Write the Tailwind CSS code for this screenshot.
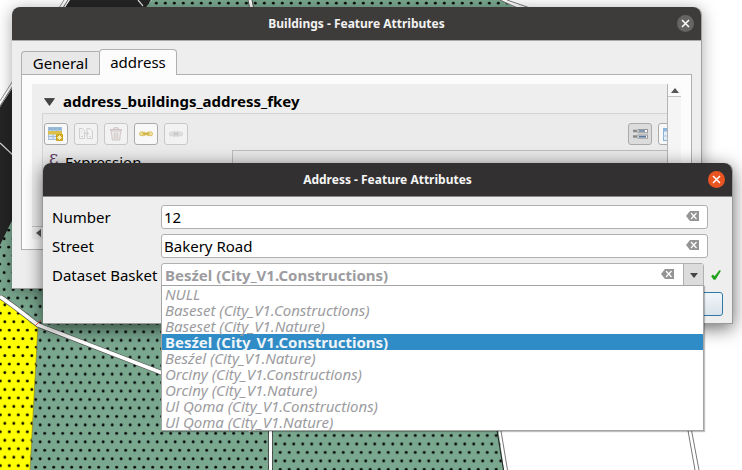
<!DOCTYPE html>
<html lang="en">
<head>
<meta charset="utf-8">
<title>Feature Attributes</title>
<script src="https://cdn.jsdelivr.net/npm/@tailwindcss/browser@4"></script>
</head>
<body class="relative h-screen overflow-hidden bg-white font-['Noto_Sans','Open_Sans',sans-serif] text-[15px] text-black">

<!-- Map canvas -->
<svg class="absolute left-0 top-0" width="742" height="470" viewBox="0 0 742 470" aria-hidden="true">
  <defs>
    <pattern id="dotsLeft" width="9" height="16.93" patternUnits="userSpaceOnUse" x="4.2" y="463.1">
      <rect width="9" height="17" fill="#7aa88f"/>
      <circle cx="4.5" cy="4.2" r="1.4"/><circle cx="0" cy="12.7" r="1.4"/><circle cx="9" cy="12.7" r="1.4"/>
    </pattern>
    <pattern id="dotsRight" width="9" height="16.93" patternUnits="userSpaceOnUse" x="5.7" y="448.3">
      <rect width="9" height="17" fill="#7aa88f"/>
      <circle cx="4.5" cy="4.2" r="1.4"/><circle cx="0" cy="12.7" r="1.4"/><circle cx="9" cy="12.7" r="1.4"/>
    </pattern>
    <pattern id="dotsTop" width="9" height="16.93" patternUnits="userSpaceOnUse" x="-1.2" y="-1">
      <rect width="9" height="17" fill="#7aa88f"/>
      <circle cx="4.5" cy="4.2" r="1.4"/><circle cx="0" cy="12.7" r="1.4"/><circle cx="9" cy="12.7" r="1.4"/>
    </pattern>
    <pattern id="dotsYellow" width="9" height="16.93" patternUnits="userSpaceOnUse" x="4.8" y="461.5">
      <rect width="9" height="17" fill="#ffff00"/>
      <circle cx="4.5" cy="4.2" r="1.4"/><circle cx="0" cy="12.7" r="1.4"/><circle cx="9" cy="12.7" r="1.4"/>
    </pattern>
  </defs>
  <path d="M152 0H500L520 10H140Z" fill="url(#dotsTop)"/>
  <path d="M0 240L40 170H270V470H0Z" fill="url(#dotsLeft)"/>
  <path d="M270 400H494L504 470H270Z" fill="url(#dotsRight)"/>
  <path d="M492 400L503.500 470" stroke="#222" fill="none"/>
  <path d="M70 0H151L40 163L0 245V107Z" fill="#252525"/>
  <path d="M68 0L0 106" stroke="#444" stroke-width=".8"/>
  <path d="M64 0L0 101" stroke="#777" stroke-width=".8"/>
  <path d="M138 0L143 6M0 143L14 156" stroke="#ddd" stroke-width="1.2"/>
  <path d="M0 299L38 325L30 470H0Z" fill="url(#dotsYellow)"/>
  <path d="M38 325L30 470" stroke="#8a7a20" stroke-width=".6"/>
  <path d="M0 296.500L16 308L38 325L170 376" fill="none" stroke="#555" stroke-width="5"/>
  <path d="M0 296.500L16 308L38 325L170 376" fill="none" stroke="#fff" stroke-width="3.600"/>
  <path d="M35 326L41 320" stroke="#e33" stroke-width=".8"/>
  <path d="M250 0L252 10M270.500 425V470" stroke="#444" stroke-width="4.600"/>
  <path d="M250 0L252 10M270.500 425V470" stroke="#fff" stroke-width="3"/>
  <path d="M500 0L520 9M507 0L530 8M500 425L507.500 470M687 425L695 470M690.500 425L699 470" fill="none" stroke="#555" stroke-width=".8"/>
</svg>

<!-- Buildings window -->
<section aria-labelledby="win1" class="absolute left-[12px] right-[40px] top-[7px] rounded-t-lg border-r border-b border-[#a0a0a0] bg-[#eeeeee] shadow-[0_2px_16px_rgba(0,0,0,0.35)]">
  <header class="relative flex h-[33px] items-center justify-center rounded-t-lg bg-[#3e3c3a]">
    <h1 id="win1" class="text-[12px] font-bold text-[#f2f2f2]">Buildings - Feature Attributes</h1>
    <button aria-label="Close" class="absolute right-[7px] flex size-[17px] items-center justify-center rounded-full bg-[#666564]">
      <svg width="9" height="9" viewBox="0 0 9 9"><path d="M1 1L8 8M8 1L1 8" stroke="#fff" stroke-width="1.500"/></svg>
    </button>
  </header>
  <div class="border-t border-[#aaa] px-[9px] pt-2 pb-[38px]">
    <div role="tablist" class="relative z-10 flex items-end">
      <button role="tab" aria-selected="false" class="h-6 w-[78px] rounded-tl-sm border border-r-0 border-[#b0b0b0] bg-[#e8e8e8]">General</button>
      <button role="tab" aria-selected="true" class="h-[26px] w-[78px] rounded-t-sm border border-b-0 border-[#b0b0b0] bg-[#fcfcfc]">address</button>
    </div>
    <div role="tabpanel" class="-mt-px border border-[#b0b0b0] bg-[#fcfcfc] p-[10px] pt-[9px]">
      <div class="flex h-[142px]">
        <div class="min-w-0 flex-1 overflow-hidden bg-[#eeeeee]">
          <h2 class="flex h-[29px] items-center gap-2 pt-[6px] pl-3 font-bold">
            <svg width="11" height="8" viewBox="0 0 11 8"><path d="M.5 .5H10.500L5.500 7.500Z" fill="#444" stroke="#222" stroke-width=".6"/></svg>
            address_buildings_address_fkey
          </h2>
          <div class="-mr-4 ml-[10px] h-[120px] border-t border-l border-[#d4d4d4] bg-[#ebebeb] pt-[9px]">
            <div class="flex h-[22px] gap-[6px] pr-px pl-px">
              <button aria-label="Add child feature" class="flex w-6 items-center justify-center rounded-[3px] border border-[#aaa] bg-[#f8f8f8]">
                <svg width="16" height="14" viewBox="0 0 16 14"><rect x=".5" y=".5" width="13" height="12" fill="#dce8f4" stroke="#a3bfd8"/><path d="M1 2H13" stroke="#8fb4d6" stroke-width="3"/><path d="M5 1V12M9 1V12M1 9.500H13" stroke="#a3bfd8"/><rect x="0" y="4" width="14" height="3.500" rx=".8" fill="#dcc04a"/><rect x="8" y="7" width="7" height="7" rx="1" fill="#cda51d"/><path d="M11.500 8V13M9 10.500H14M9.800 8.800L13.200 12.200M13.200 8.800L9.800 12.200" stroke="#fff6c0" stroke-width=".9"/></svg>
              </button>
              <button disabled aria-label="Duplicate child feature" class="flex w-6 items-center justify-center rounded-[3px] border border-[#c8c8c8] bg-[#f2f2f2]">
                <svg width="14" height="12" viewBox="0 0 14 12" fill="none" stroke="#d0d0d0"><path d="M.5 .5H3.500L5.500 2.500V10.500H.5ZM8 .5H11L13.500 3V10.500H8Z"/><path d="M4.500 5.500H9M7.500 3.500L9.500 5.500L7.500 7.500M2 8.500H4M2 4H3M10.500 8.500H12"/></svg>
              </button>
              <button disabled aria-label="Delete child feature" class="flex w-6 items-center justify-center rounded-[3px] border border-[#c8c8c8] bg-[#f2f2f2]">
                <svg width="12" height="14" viewBox="0 0 12 14" fill="none" stroke="#cdc0c0"><path d="M4 2V.8H8V2M.5 2.500H11.500V4H.5ZM1.500 4.500L2.300 13H9.700L10.500 4.500M4.200 5.500V12M6 5.500V12M7.800 5.500V12"/></svg>
              </button>
              <button aria-label="Link existing features" class="flex w-6 items-center justify-center rounded-[3px] border border-[#aaa] bg-[#f8f8f8]">
                <svg width="14" height="6" viewBox="0 0 14 6"><rect x=".5" y="1" width="6" height="3.600" rx="1.600" fill="#efe3a8" stroke="#d9c05c"/><rect x="7.500" y="1" width="6" height="3.600" rx="1.600" fill="#efe3a8" stroke="#d9c05c"/><path d="M3.500 2.800H10.500" stroke="#c9a92c" stroke-width="1.400"/></svg>
              </button>
              <button disabled aria-label="Unlink features" class="flex w-6 items-center justify-center rounded-[3px] border border-[#c8c8c8] bg-[#f2f2f2]">
                <svg width="14" height="8" viewBox="0 0 14 8" fill="#e2e2e2" stroke="#d4d4d4"><rect x=".5" y="2.200" width="5.500" height="3.600" rx="1.600"/><rect x="8" y="2.200" width="5.500" height="3.600" rx="1.600"/><path d="M5.200 1L8.800 7M8.800 1L5.200 7M3.500 4H10.500" stroke="#c4c4c4"/></svg>
              </button>
              <span class="flex-1"></span>
              <button aria-label="Form view" aria-pressed="true" class="flex w-6 items-center justify-center rounded-[3px] border border-[#aaa] bg-[#dcdcdc]">
                <svg width="15" height="10" viewBox="0 0 15 10"><path d="M0 2H4M0 7.500H4" stroke="#888" stroke-width="2.400"/><rect x="5" y=".5" width="9.500" height="3.200" fill="#fff" stroke="#999"/><rect x="5" y="6" width="9.500" height="3.200" fill="#fff" stroke="#999"/><path d="M6 2H12M6 7.600H13" stroke="#55779c" stroke-width="1.600"/></svg>
              </button>
              <button aria-label="Table view" class="flex w-6 items-center rounded-[3px] border border-[#aaa] bg-[#f8f8f8] pl-1">
                <svg width="15" height="13" viewBox="0 0 15 13"><rect x=".5" y=".5" width="14" height="12" fill="#e4eef8" stroke="#8cb0d0"/><path d="M0 2H15" stroke="#8db8de" stroke-width="3"/><path d="M4.500 2V12M0 8H15" stroke="#a8c4de"/></svg>
              </button>
            </div>
            <div class="mt-[5px] flex h-6 items-center">
              <span class="w-[22px] pb-2 pl-[6px] font-['DejaVu_Serif',serif] text-[18px] leading-5 text-[#5f3f68]" aria-hidden="true">ε</span>
              <label for="expr" class="w-[167px]">Expression</label>
              <input id="expr" type="text" class="h-6 min-w-0 flex-1 border border-[#bcbcbc] bg-[#e8e8e8]">
            </div>
          </div>
        </div>
        <div class="w-[14px] border-l border-[#b4b4b4] bg-[#f5f5f5]">
          <div class="flex h-[13px] items-center justify-center border-b border-[#c4c4c4] bg-[#fafafa]">
            <svg width="8" height="5" viewBox="0 0 8 5"><path d="M0 5L4 0L8 5Z" fill="#555"/></svg>
          </div>
        </div>
      </div>
      <div class="flex h-[13px] items-center border-t border-[#c4c4c4] bg-[#f2f2f2] pl-1">
        <svg width="5" height="8" viewBox="0 0 5 8"><path d="M5 0L0 4L5 8Z" fill="#555"/></svg>
      </div>
    </div>
  </div>
</section>

<!-- Address window -->
<section aria-labelledby="win2" class="absolute left-[43px] right-[9px] top-[163px] rounded-t-lg border-r border-b border-[#999] bg-[#eeeeee] shadow-[0_4px_18px_rgba(0,0,0,0.6)]">
  <header class="relative flex h-[33px] items-center justify-center rounded-t-lg bg-[#333031]">
    <h1 id="win2" class="text-[12px] font-bold text-[#f5f5f5]">Address - Feature Attributes</h1>
    <button aria-label="Close" class="absolute right-[7px] flex size-[17px] items-center justify-center rounded-full bg-[#e95420]">
      <svg width="9" height="9" viewBox="0 0 9 9"><path d="M1 1L8 8M8 1L1 8" stroke="#fff" stroke-width="1.500"/></svg>
    </button>
  </header>
  <form class="border-t border-[#888] pt-2 pr-[9px] pb-[7px] pl-[9px]">
    <div class="flex flex-col gap-[5px]">
      <div class="flex h-6 items-center pr-[15px]">
        <label for="num" class="w-[109px] shrink-0">Number</label>
        <div class="relative flex-1">
          <input id="num" type="text" value="12" class="block h-6 w-full rounded-[3px] border border-[#b0b0b0] bg-white pl-[2px]">
          <button type="button" aria-label="Clear number" class="absolute top-[6px] right-[9px]">
            <svg class="block" width="13" height="10" viewBox="0 0 13 10"><path d="M0 5L4 0H13V10H4Z" fill="#949494"/><path d="M5 2L10.500 8M10.500 2L5 8" stroke="#fff" stroke-width="1.200"/></svg>
          </button>
        </div>
      </div>
      <div class="flex h-6 items-center pr-[15px]">
        <label for="street" class="w-[109px] shrink-0">Street</label>
        <div class="relative flex-1">
          <input id="street" type="text" value="Bakery Road" class="block h-6 w-full rounded-[3px] border border-[#b0b0b0] bg-white pl-[2px]">
          <button type="button" aria-label="Clear street" class="absolute top-[6px] right-[9px]">
            <svg class="block" width="13" height="10" viewBox="0 0 13 10"><path d="M0 5L4 0H13V10H4Z" fill="#949494"/><path d="M5 2L10.500 8M10.500 2L5 8" stroke="#fff" stroke-width="1.200"/></svg>
          </button>
        </div>
      </div>
      <div class="flex h-6 items-center">
        <label for="basket" class="w-[109px] shrink-0">Dataset Basket</label>
        <div class="relative flex-1">
          <select id="basket" class="block h-6 w-full appearance-none rounded-t-[3px] border border-[#b0b0b0] bg-white pl-[3px] font-bold text-[#9c9ca0]">
            <option>Besźel (City_V1.Constructions)</option>
          </select>
          <button type="button" aria-label="Clear basket" class="absolute top-[6px] right-[30px]">
            <svg class="block" width="13" height="10" viewBox="0 0 13 10"><path d="M0 5L4 0H13V10H4Z" fill="#949494"/><path d="M5 2L10.500 8M10.500 2L5 8" stroke="#fff" stroke-width="1.200"/></svg>
          </button>
          <span class="pointer-events-none absolute top-px right-px bottom-px flex w-5 items-center justify-center border-l border-[#b0b0b0] bg-[#dcdcdc]">
            <svg width="8" height="5" viewBox="0 0 8 5"><path d="M0 0H8L4 5Z" fill="#444"/></svg>
          </span>
          <ul role="listbox" aria-label="Dataset Basket" class="absolute top-[22px] right-0 left-0 z-10 border border-[#a4a4a4] bg-white leading-4 text-[#9c9ca0] italic shadow-[1px_1px_1px_rgba(0,0,0,0.25)]">
            <li role="option" class="h-4 pl-[3px]">NULL</li>
            <li role="option" class="h-4 pl-[3px]">Baseset (City_V1.Constructions)</li>
            <li role="option" class="h-4 pl-[3px]">Baseset (City_V1.Nature)</li>
            <li role="option" aria-selected="true" class="h-4 bg-[#308cc6] pl-[3px] font-bold text-[#eef4f8] not-italic">Besźel (City_V1.Constructions)</li>
            <li role="option" class="h-4 pl-[3px]">Besźel (City_V1.Nature)</li>
            <li role="option" class="h-4 pl-[3px]">Orciny (City_V1.Constructions)</li>
            <li role="option" class="h-4 pl-[3px]">Orciny (City_V1.Nature)</li>
            <li role="option" class="h-4 pl-[3px]">Ul Qoma (City_V1.Constructions)</li>
            <li role="option" class="h-4 pl-[3px]">Ul Qoma (City_V1.Nature)</li>
          </ul>
        </div>
        <svg class="mr-[2px] ml-[7px]" width="10" height="10" viewBox="0 0 9 9" role="img" aria-label="Valid"><path d="M.1 5.600L1.900 4.100L3.300 5.600L7.400 .2L9 .6L4 8.800H2.400Z" fill="#1fa31f"/></svg>
      </div>
    </div>
    <div class="mt-[5px] flex justify-end">
      <button type="submit" aria-label="OK" class="h-6 w-20 rounded-[3px] border border-[#2f78a8] bg-linear-to-b from-[#f2f6f9] to-[#d8e3ea]"></button>
    </div>
  </form>
</section>
</body>
</html>
